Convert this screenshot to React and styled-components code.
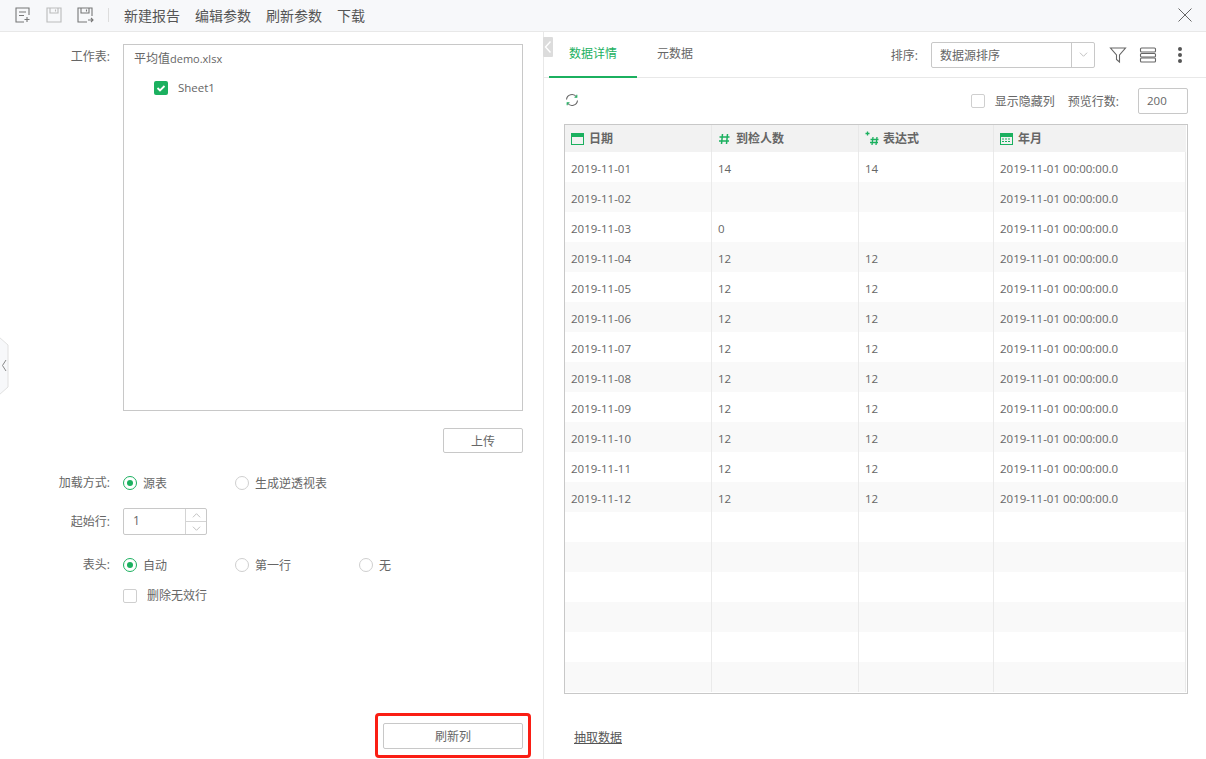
import React from "react";
import styled, { createGlobalStyle } from "styled-components";

const Global = createGlobalStyle`
  html, body { margin: 0; padding: 0; background: #fff; }
  body { font-family: "Open Sans", "Noto Sans CJK SC", sans-serif; font-size: 12px; color: #666; }
  * { box-sizing: border-box; }
`;

const Page = styled.div`
  position: relative;
  width: 1206px;
  height: 759px;
  overflow: hidden;
  display: flex;
  flex-direction: column;
`;
const Toolbar = styled.header`
  height: 32px;
  flex: none;
  display: flex;
  align-items: center;
  background: #f7f8fa;
  border-bottom: 1px solid #e8e8e8;
  padding: 0 13px 1px 14px;
`;
const ToolIcon = styled.svg`
  width: 18px;
  height: 18px;
  margin-right: 13px;
  flex: none;
`;
const ToolDivider = styled.span`
  width: 1px;
  height: 14px;
  background: #ddd;
  margin: 0 15px 0 1px;
`;
const ToolText = styled.span`
  font-size: 14px;
  color: #555;
  margin-right: 15px;
  white-space: nowrap;
`;
const Close = styled.svg`
  width: 16px;
  height: 16px;
  margin-left: auto;
`;
const Body = styled.div`
  flex: 1;
  display: flex;
  min-height: 0;
`;
const Left = styled.section`
  width: 544px;
  flex: none;
  border-right: 1px solid #e8e8e8;
  padding: 12px 20px 10px 0;
  display: flex;
  flex-direction: column;
`;
const Row = styled.div`
  display: flex;
  align-items: ${p => p.$top ? "flex-start" : "center"};
  height: ${p => p.$h || "auto"};
  margin-top: ${p => p.$mt || "0"};
`;
const Label = styled.label`
  width: 110px;
  flex: none;
  text-align: right;
  margin-right: 13px;
  color: #666;
  line-height: 26px;
  white-space: nowrap;
`;
const TreeBox = styled.div`
  flex: 1;
  height: 367px;
  border: 1px solid #c8c8c8;
`;
const FileName = styled.div`
  padding: 5px 0 0 10px;
  line-height: 18px;
`;
const FileExt = styled.span`
  font-size: 11px;
`;
const TreeItem = styled.div`
  display: flex;
  align-items: center;
  margin: 11px 0 0 30px;
  gap: 10px;
  line-height: 16px;
`;
const SheetName = styled.span`
  font-size: 11.5px;
  padding-top: 1px;
`;
const CheckOn = styled.span`
  width: 14px;
  height: 14px;
  border-radius: 2px;
  background: #1bb05f;
  display: flex;
  align-items: center;
  justify-content: center;
`;
const CheckOff = styled.span`
  width: 14px;
  height: 14px;
  border-radius: 2px;
  border: 1px solid #cfcfcf;
  background: #fff;
  flex: none;
`;
const Button = styled.button`
  display: block;
  width: ${p => p.$w};
  height: ${p => p.$h || "25px"};
  border: 1px solid #c8c8c8;
  border-radius: 2px;
  background: #fff;
  font: inherit;
  color: #666;
  padding: 0;
`;
const EndRow = styled.div`
  display: flex;
  justify-content: flex-end;
  margin-top: ${p => p.$mt || "0"};
`;
const RadioItem = styled.span`
  width: ${p => p.$w || "112px"};
  flex: none;
  display: flex;
  align-items: center;
  gap: 6px;
  white-space: nowrap;
`;
const Radio = styled.span`
  width: 14px;
  height: 14px;
  border-radius: 50%;
  border: 1px solid ${p => p.$on ? "#1bb05f" : "#cfcfcf"};
  display: flex;
  align-items: center;
  justify-content: center;
  &::after {
    content: "";
    display: ${p => p.$on ? "block" : "none"};
    width: 6px;
    height: 6px;
    border-radius: 50%;
    background: #1bb05f;
  }
`;
const Spinner = styled.div`
  width: 84px;
  height: 27px;
  border: 1px solid #c8c8c8;
  border-radius: 2px;
  display: flex;
`;
const SpinValue = styled.span`
  flex: 1;
  padding-left: 9px;
  line-height: 24px;
`;
const SpinArrows = styled.div`
  width: 21px;
  border-left: 1px solid #d4d4d4;
  display: flex;
  flex-direction: column;
`;
const SpinArrow = styled.span`
  flex: 1;
  display: flex;
  align-items: center;
  justify-content: center;
  & + & { border-top: 1px solid #d4d4d4; }
`;
const InlineCheck = styled.div`
  display: flex;
  align-items: center;
  gap: 10px;
  margin: 13px 0 0 123px;
  line-height: 16px;
`;
const Right = styled.section`
  flex: 1;
  min-width: 0;
  position: relative;
  display: flex;
  flex-direction: column;
`;
const Tabs = styled.div`
  height: 46px;
  flex: none;
  border-bottom: 1px solid #e8e8e8;
  display: flex;
  align-items: center;
  padding: 0 17px 0 5px;
`;
const Tab = styled.div`
  width: ${p => p.$w};
  height: 46px;
  margin-bottom: -1px;
  display: flex;
  align-items: center;
  justify-content: ${p => p.$active ? "center" : "flex-start"};
  padding-bottom: 2px;
  padding-left: ${p => p.$pl || "0"};
  color: ${p => p.$active ? "#1bb05f" : "#666"};
  border-bottom: 2px solid ${p => p.$active ? "#1bb05f" : "transparent"};
`;
const SortLabel = styled.span`
  margin-left: auto;
  margin-right: 13px;
`;
const Select = styled.div`
  width: 164px;
  height: 26px;
  border: 1px solid #c8c8c8;
  border-radius: 2px;
  display: flex;
  align-items: center;
  padding-left: 8px;
`;
const SelectText = styled.span`
  flex: 1;
`;
const SelectArrow = styled.span`
  width: 23px;
  height: 24px;
  border-left: 1px solid #c8c8c8;
  display: flex;
  align-items: center;
  justify-content: center;
`;
const HeadIcon = styled.svg`
  width: 18px;
  height: 18px;
  margin-left: ${p => p.$ml || "14px"};
  flex: none;
`;
const Options = styled.div`
  height: 46px;
  flex: none;
  display: flex;
  align-items: center;
  padding: 0 18px 0 21px;
`;
const RefreshIcon = styled.svg`
  width: 14px;
  height: 14px;
  margin-top: -2px;
`;
const OptionRight = styled.div`
  margin-left: auto;
  display: flex;
  align-items: center;
`;
const OptionLabel = styled.span`
  margin-left: 10px;
  margin-right: 13px;
`;
const CountInput = styled.div`
  width: 50px;
  height: 26px;
  border: 1px solid #c8c8c8;
  border-radius: 2px;
  margin-left: 19px;
  line-height: 24px;
  padding-left: 8px;
  font-size: 11.5px;
`;
const TableFrame = styled.div`
  margin: 0 18px 0 20px;
  height: 570px;
  border: 1px solid #c8c8c8;
  padding-right: 1px;
  flex: none;
`;
const Grid = styled.div`
  display: grid;
  grid-template-columns: 147px 147px 135px 192px;
`;
const HeadCell = styled.div`
  height: 27px;
  background: #f2f2f2;
  border-right: 1px solid #e8e8e8;
  display: flex;
  align-items: center;
  padding: 0 0 1px 6px;
  gap: 4px;
  font-weight: 700;
  font-size: 12px;
  color: #666;
  &:nth-child(4) { border-right: 0; }
`;
const HeadLabel = styled.span`
  margin-left: ${p => p.$ml || "1px"};
`;
const Cell = styled.div`
  height: 30px;
  line-height: 33px;
  padding-left: 6px;
  font-size: 11.5px;
  background: ${p => p.$alt ? "#f9f9f9" : "#fff"};
  border-right: 1px solid #eaeaea;
  white-space: nowrap;
`;
const Extract = styled.a`
  display: block;
  margin: 35px 0 0 30px;
  color: #555;
  text-decoration: underline;
  line-height: 18px;
  width: fit-content;
`;
const Highlight = styled.div`
  position: absolute;
  left: 375px;
  top: 713px;
  width: 156px;
  height: 45px;
  border: 3px solid #fa1e14;
  border-radius: 4px;
  pointer-events: none;
`;
const SideHandle = styled.svg`
  position: absolute;
  left: 0;
  top: 336px;
  width: 10px;
  height: 60px;
`;
const PaneToggle = styled.div`
  position: absolute;
  left: -1px;
  top: 5px;
  width: 10px;
  height: 20px;
  background: #dcdcdc;
  border-radius: 1px;
  display: flex;
  align-items: center;
  justify-content: center;
`;

const I = "#777";
const rows = [
  ["2019-11-01", "14", "14"],
  ["2019-11-02", "", ""],
  ["2019-11-03", "0", ""],
  ...["04", "05", "06", "07", "08", "09", "10", "11", "12"].map(d => [`2019-11-${d}`, "12", "12"]),
  ...Array(6).fill(null),
];

const Chevron = ({ dir = "down", size = 9, color = "#bbb" }) => (
  <svg width={size} height={size} viewBox="0 0 10 10" fill="none" stroke={color} strokeWidth="1">
    <path d={dir === "down" ? "M1 3l4 4 4-4" : "M1 7l4-4 4 4"} />
  </svg>
);

export default function App() {
  return (
    <Page>
      <Global />
      <Toolbar>
        <ToolIcon viewBox="0 0 18 18" fill="none" stroke={I} strokeWidth="1.1">
          <path d="M15 9V2H2v14h8" /><path d="M5 6h7M5 9.500h5M13 11v5M10.500 13.500h5" />
        </ToolIcon>
        <ToolIcon viewBox="0 0 18 18" fill="none" stroke="#bbb" strokeWidth="1.1">
          <path d="M2 2h14v14H2z" /><path d="M5 2v5h8V2" /><path d="M10.500 3.500v2" />
        </ToolIcon>
        <ToolIcon viewBox="0 0 18 18" fill="none" stroke={I} strokeWidth="1.1">
          <path d="M16 10V2H2v14h9" /><path d="M5 2v5h8V2" /><path d="M10.500 3.500v2M12 14h5M15 12l2 2-2 2" />
        </ToolIcon>
        <ToolDivider />
        <ToolText>新建报告</ToolText>
        <ToolText>编辑参数</ToolText>
        <ToolText>刷新参数</ToolText>
        <ToolText>下载</ToolText>
        <Close viewBox="0 0 16 16" fill="none" stroke="#666" strokeWidth="1"><path d="M1.500 1.500l13 13M14.500 1.500l-13 13" /></Close>
      </Toolbar>
      <Body>
        <Left>
          <Row $top>
            <Label>工作表:</Label>
            <TreeBox>
              <FileName>平均值<FileExt>demo.xlsx</FileExt></FileName>
              <TreeItem>
                <CheckOn>
                  <svg width="10" height="10" viewBox="0 0 10 10" fill="none" stroke="#fff" strokeWidth="1.800"><path d="M1.500 5l2.500 2.500 4.500-4.500" /></svg>
                </CheckOn>
                <SheetName>Sheet1</SheetName>
              </TreeItem>
            </TreeBox>
          </Row>
          <EndRow $mt="17px"><Button $w="80px">上传</Button></EndRow>
          <Row $h="20px" $mt="20px">
            <Label>加载方式:</Label>
            <RadioItem><Radio $on />源表</RadioItem>
            <RadioItem><Radio />生成逆透视表</RadioItem>
          </Row>
          <Row $mt="15px">
            <Label>起始行:</Label>
            <Spinner>
              <SpinValue>1</SpinValue>
              <SpinArrows>
                <SpinArrow><Chevron dir="up" /></SpinArrow>
                <SpinArrow><Chevron /></SpinArrow>
              </SpinArrows>
            </Spinner>
          </Row>
          <Row $h="20px" $mt="20px">
            <Label>表头:</Label>
            <RadioItem><Radio $on />自动</RadioItem>
            <RadioItem $w="124px"><Radio />第一行</RadioItem>
            <RadioItem><Radio />无</RadioItem>
          </Row>
          <InlineCheck><CheckOff />删除无效行</InlineCheck>
          <EndRow $mt="auto"><Button $w="140px" $h="26px">刷新列</Button></EndRow>
        </Left>
        <Right>
          <PaneToggle>
            <svg width="8" height="14" viewBox="0 0 8 14" fill="none" stroke="#fff" strokeWidth="1.400"><path d="M6.500 1.500L1.500 7l5 5.500" /></svg>
          </PaneToggle>
          <Tabs>
            <Tab $active $w="88px">数据详情</Tab>
            <Tab $w="60px" $pl="20px">元数据</Tab>
            <SortLabel>排序:</SortLabel>
            <Select>
              <SelectText>数据源排序</SelectText>
              <SelectArrow><Chevron /></SelectArrow>
            </Select>
            <HeadIcon $ml="14px" viewBox="0 0 18 18" fill="none" stroke="#666" strokeWidth="1.100">
              <path d="M1.500 2h15l-6 7v7l-3-2.500V9z" />
            </HeadIcon>
            <HeadIcon $ml="12px" viewBox="0 0 18 18" fill="none" stroke="#666" strokeWidth="1.100">
              <rect x="1.500" y="2" width="15" height="4" rx="1" /><rect x="1.500" y="7.500" width="15" height="3.500" rx="1" /><rect x="1.500" y="12" width="15" height="4" rx="1" />
            </HeadIcon>
            <HeadIcon $ml="14px" viewBox="0 0 18 18" fill="#555">
              <circle cx="9" cy="3" r="2" /><circle cx="9" cy="9" r="2" /><circle cx="9" cy="15" r="2" />
            </HeadIcon>
          </Tabs>
          <Options>
            <RefreshIcon viewBox="0 0 14 14" fill="none" stroke="#666" strokeWidth="1.100">
              <path d="M1.500 6.500A5.500 5.500 0 0 1 11.500 4M12.500 7.500A5.500 5.500 0 0 1 2.500 10" />
              <path d="M9.500 4.200h2.300V1.800M4.500 9.800H2.200v2.400" stroke="#1bb05f" />
            </RefreshIcon>
            <OptionRight>
              <CheckOff />
              <OptionLabel>显示隐藏列</OptionLabel>
              <span>预览行数:</span>
              <CountInput>200</CountInput>
            </OptionRight>
          </Options>
          <TableFrame>
            <Grid>
              <HeadCell>
                <svg width="13" height="13" viewBox="0 0 13 13" fill="none" stroke="#1bb05f"><rect x="0.500" y="1.500" width="12" height="11" /><path d="M0.500 3.500h12" strokeWidth="3" /></svg>
                <HeadLabel>日期</HeadLabel>
              </HeadCell>
              <HeadCell>
                <svg width="13" height="13" viewBox="0 0 13 13" fill="none" stroke="#1bb05f" strokeWidth="1.500"><path d="M4.500 2L3.500 12M9.500 2l-1 10M1.500 5h10M1 9h10" /></svg>
                <HeadLabel>到检人数</HeadLabel>
              </HeadCell>
              <HeadCell>
                <svg width="14" height="15" viewBox="0 0 14 15" fill="none" stroke="#1bb05f" strokeWidth="1.300"><path d="M2.500 0.500v4M0.500 2.500h4" /><path d="M8 6l-1 8M12 6l-1 8M5.500 8.500h8M5 11.500h8" /></svg>
                <HeadLabel $ml="0">表达式</HeadLabel>
              </HeadCell>
              <HeadCell>
                <svg width="13" height="13" viewBox="0 0 13 13" fill="#1bb05f" stroke="#1bb05f"><rect x="0.500" y="1.500" width="12" height="11" fill="none" /><path d="M0.500 3.500h12" strokeWidth="3" /><path d="M2 7h9M2 9.500h9" strokeDasharray="2 1" /></svg>
                <HeadLabel>年月</HeadLabel>
              </HeadCell>
              {rows.map((r, i) => (
                <React.Fragment key={i}>
                  <Cell $alt={i % 2 === 1}>{r ? r[0] : ""}</Cell>
                  <Cell $alt={i % 2 === 1}>{r ? r[1] : ""}</Cell>
                  <Cell $alt={i % 2 === 1}>{r ? r[2] : ""}</Cell>
                  <Cell $alt={i % 2 === 1}>{r ? "2019-11-01 00:00:00.0" : ""}</Cell>
                </React.Fragment>
              ))}
            </Grid>
          </TableFrame>
          <Extract>抽取数据</Extract>
        </Right>
      </Body>
      <SideHandle viewBox="0 0 10 60" fill="#f7f8fa" stroke="#e0e0e0">
        <path d="M-1 1l9 8v42l-9 8z" />
        <path d="M6 24l-3.500 5.500 3.500 5.500" fill="none" stroke="#888" />
      </SideHandle>
      <Highlight />
    </Page>
  );
}
